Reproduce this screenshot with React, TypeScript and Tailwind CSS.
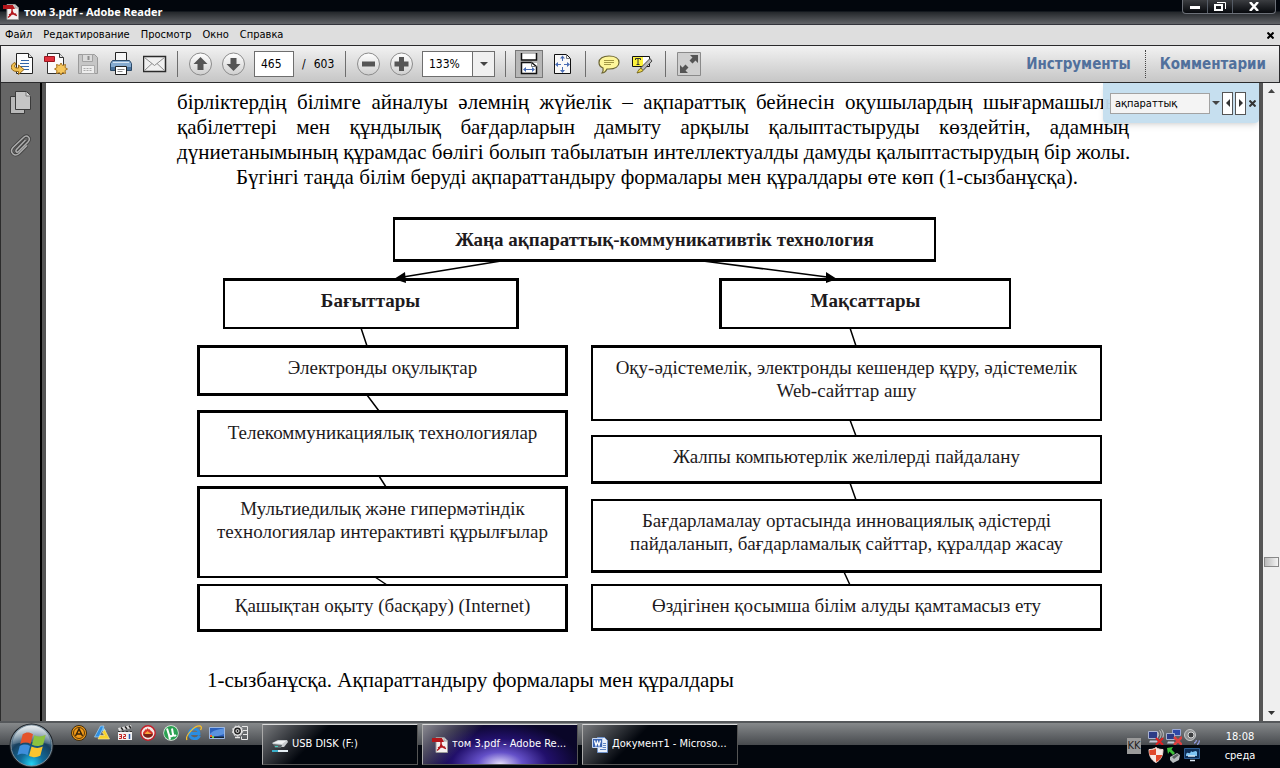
/**
 * PDF reader window
 * Document view with toolbar, find bar and the desktop taskbar below
 */

import React from 'react';

const UI_FONT = "font-['DejaVu_Sans_Condensed','DejaVu_Sans',sans-serif]";

interface DiagramNode {
  text: string;
  box: string;
}

const nodes: DiagramNode[] = [
  {
    text: 'Жаңа ақпараттық-коммуникативтік технология',
    box: 'left-[196px] top-0 w-[543px] h-[45px] border-y-[3px] border-x-2 pt-2 font-bold',
  },
  {
    text: 'Бағыттары',
    box: 'left-[26px] top-[61px] w-[296px] h-[51px] border-t-[3px] border-r-[3px] border-b-2 border-l-2 pt-2 font-bold',
  },
  {
    text: 'Мақсаттары',
    box: 'left-[522px] top-[61px] w-[292px] h-[51px] border-t-[3px] border-l-[3px] border-b-2 border-r-2 pt-2 font-bold',
  },
  { text: 'Электронды оқулықтар', box: 'left-0 top-[128px] w-[371px] h-[51px] border-[3px] pt-2' },
  {
    text: 'Телекоммуникациялық технологиялар',
    box: 'left-0 top-[193px] w-[371px] h-[67px] border-[3px] border-b-2 pt-2',
  },
  {
    text: 'Мультиедилық және гипермәтіндік\nтехнологиялар интерактивті құрылғылар',
    box: 'left-0 top-[269px] w-[371px] h-[92px] border-[3px] border-b-2 pt-2',
  },
  {
    text: 'Қашықтан оқыту (басқару) (Internet)',
    box: 'left-0 top-[367px] w-[371px] h-[48px] border-[3px] border-t-2 pt-2',
  },
  {
    text: 'Оқу-әдістемелік, электронды кешендер құру, әдістемелік\nWeb-сайттар ашу',
    box: 'left-[394px] top-[128px] w-[511px] h-[76px] border-2 border-t-[3px] pt-2',
  },
  {
    text: 'Жалпы компьютерлік желілерді пайдалану',
    box: 'left-[394px] top-[218px] w-[511px] h-[49px] border-2 border-b-[3px] pt-2',
  },
  {
    text: 'Бағдарламалау ортасында инновациялық әдістерді\nпайдаланып, бағдарламалық сайттар, құралдар жасау',
    box: 'left-[394px] top-[282px] w-[511px] h-[74px] border-2 border-b-[3px] pt-2',
  },
  {
    text: 'Өздігінен қосымша білім алуды қамтамасыз ету',
    box: 'left-[394px] top-[367px] w-[511px] h-[47px] border-2 border-b-[3px] pt-2',
  },
];

/* ---------- Icons ---------- */

const PdfIcon: React.FC = () => (
  <svg className="size-4 shrink-0" viewBox="0 0 16 16">
    <path d="M4 .5h8l3.500 3.500v11.500H4z" fill="#f4f0f0" stroke="#9b9b9b" />
    <path d="M12 .5v3.500h3.500" fill="#d8d8d8" stroke="#9b9b9b" />
    <path d="M0 1h10l2 4H0z" fill="#b3161b" />
    <path d="M9 5c.5 3-1 6.500-4 8.500M9 7c1 3 2.500 4 5 4.500M6 11c2-1 4.500-1.500 7-.8" fill="none" stroke="#b3161b" strokeWidth="1.500" />
  </svg>
);

const ExportIcon: React.FC = () => (
  <svg className="size-6" viewBox="0 0 24 24">
    <path d="M5.500 1.500h12l4 4v16h-16z" fill="#fdfdfd" stroke="#222" />
    <path d="M17.500 1.500v4h4" fill="#ddd" stroke="#222" />
    <path d="M10 8.500h8M9 11.500h9M9 14.500h9M12 17.500h6" stroke="#3465a8" />
    <path d="M4 10.500C-1 12-1.500 19.500 6 19.500h1.500v3l5.500-5-5.500-4.500v3H6c-2.500 0-3.500-2-1-4z" fill="#f2c14e" stroke="#94671a" />
  </svg>
);

const CreatePdfIcon: React.FC = () => (
  <svg className="size-6" viewBox="0 0 24 24">
    <path d="M3.500 1.500h12l4 4v16h-16z" fill="#fbfbfb" stroke="#333" />
    <path d="M15.500 1.500v4h4" fill="#ddd" stroke="#333" />
    <path d="M.5 4.500h10v5H.5z" fill="#e0303c" stroke="#9d1620" />
    <path d="M17 11l1.500 2.500 3-1-.5 3 2.500 1.500-2.500 1.500.5 3-3-1L17 23l-1.500-2.500-3 1 .5-3-2.500-1.500 2.500-1.500-.5-3 3 1z" fill="#f5c65b" stroke="#a87420" />
  </svg>
);

const SaveIcon: React.FC = () => (
  <svg className="size-6" viewBox="0 0 24 24">
    <path d="M1.500 2.500h16l3 3v16h-19z" fill="#c6c6c6" stroke="#9a9a9a" />
    <path d="M5.500 2.500h10v7h-10z" fill="#dcdcdc" stroke="#a2a2a2" />
    <path d="M11.500 4v4" stroke="#8f8f8f" strokeWidth="2" />
    <path d="M4.500 13.500h13v8h-13z" fill="#ededed" stroke="#aaa" />
    <path d="M6.500 16.500h9M6.500 18.500h9" stroke="#aaa" strokeDasharray="2 1" />
  </svg>
);

const PrintIcon: React.FC = () => (
  <svg className="size-6" viewBox="0 0 24 24">
    <path d="M5.500.5h11v9h-11z" fill="#f5f5f5" stroke="#222" />
    <path d="M2.500 8.500h17l2 3v7h-21v-7z" fill="#86abd0" stroke="#2c4a69" />
    <path d="M1 15h20v3H1z" fill="#49719a" />
    <path d="M3 10.500h16" stroke="#d5e4f2" />
    <path d="M5.500 14.500h11v8h-11z" fill="#fff" stroke="#222" />
    <path d="M7.500 17.500h7M7.500 19.500h5" stroke="#888" />
  </svg>
);

const MailIcon: React.FC = () => (
  <svg className="size-6" viewBox="0 0 24 24">
    <path d="M.5 4.500h22v15H.5z" fill="#f1f1f1" stroke="#2b2b2b" strokeWidth="1.500" />
    <path d="M1.500 5.500l10 8 10-8M1.500 18.500l7.500-7M21.500 18.500l-7.500-7" fill="none" stroke="#8c8c8c" />
  </svg>
);

const RoundIcon: React.FC<{ path: string }> = ({ path }) => (
  <svg className="size-6" viewBox="0 0 24 24">
    <defs>
      <linearGradient id="round" x1="0" y1="0" x2="0" y2="1">
        <stop offset="0" stopColor="#fff" />
        <stop offset="1" stopColor="#cfcfcf" />
      </linearGradient>
    </defs>
    <circle cx="11.500" cy="12" r="11" fill="url(#round)" stroke="#8b8b8b" />
    <path d={path} fill="#555" />
  </svg>
);

const ScrollPagesIcon: React.FC = () => (
  <svg className="size-[26px]" viewBox="0 0 26 26">
    <path d="M6 3h15v6H6zM6 12h15v11H6z" fill="#fff" />
    <path d="M5.500 2v7h15V2M5.500 22.500v-11h10l5 4v7z" fill="none" stroke="#111" strokeWidth="1.500" />
    <path d="M15.500 11.500v4h5" fill="none" stroke="#777" />
    <path d="M8 18.500h10" stroke="#4a6db5" />
    <path d="M10 16v5l-3-2.500zM16 16v5l3-2.500z" fill="#4a6db5" />
  </svg>
);

const FitPageIcon: React.FC = () => (
  <svg className="size-6" viewBox="0 0 24 24">
    <path d="M3.500 2.500h12l4 4v15h-16z" fill="#f8f8f8" stroke="#111" />
    <path d="M15.500 2.500v4h4" fill="none" stroke="#777" />
    <path d="M11.500 5v4M11.500 15v4M6 12.500h4M13 12.500h4" stroke="#4a6db5" />
    <path d="M9 6.500l2.500-3 2.500 3zM9 18l2.500 3 2.500-3zM7 10l-3 2.500 3 2.500zM16 10l3 2.500-3 2.500z" fill="#4a6db5" />
  </svg>
);

const CommentIcon: React.FC = () => (
  <svg className="size-6" viewBox="0 0 24 24">
    <path d="M12 4c6 0 10 2.500 10 6.500S18 17 12 17c-1 0-1.500 0-2 0-1 2-3 4-5 4 1-1.500 1.500-3 1-5-2.500-1-4-3-4-5.500C2 6.500 6 4 12 4z" fill="#fdf59a" stroke="#6b6431" strokeWidth="1.200" />
    <path d="M7 8.500h10M7 10.500h10M7 12.500h7" stroke="#a39845" />
  </svg>
);

const HighlightIcon: React.FC = () => (
  <svg className="size-6" viewBox="0 0 24 24">
    <path d="M2.500 4.500h17v10h-17z" fill="#fff" stroke="#111" />
    <path d="M3 5h10v9H3z" fill="#fdf33d" />
    <path d="M5.500 8V6.500h5V8M8 6.500v6M6.500 12.500h3" fill="none" stroke="#333" />
    <path d="M20 6.500l2 2.500-9 9.500-4 1 2-4z" fill="#b9b9b9" stroke="#444" />
    <path d="M11 16l2 2.500c-1 1.500-3 1.500-6 2.500 1-2 2-4 4-5z" fill="#f0d94c" stroke="#77691c" />
  </svg>
);

const ExpandIcon: React.FC = () => (
  <svg className="size-6" viewBox="0 0 24 24">
    <path d="M.5.5h23v23H.5z" fill="#cfcfcf" stroke="#8a8a8a" />
    <path d="M13 3h8v8l-2.500-2.500-3 3-3-3 3-3zM3 13l2.500 2.500 3-3 3 3-3 3L11 21H3z" fill="#555" />
  </svg>
);

const PagesIcon: React.FC = () => (
  <svg className="size-6" viewBox="0 0 24 24">
    <path d="M1.500 5.500h14v17h-14z" fill="#b9b9b9" stroke="#3b3b3b" />
    <path d="M6.500.5h11l4 4v14h-15z" fill="#c5c5c5" stroke="#3b3b3b" />
    <path d="M17 1v4h4.500" fill="#ddd" stroke="#777" />
  </svg>
);

const ClipIcon: React.FC = () => (
  <svg className="size-6" viewBox="0 0 24 24">
    <path d="M16.500 7l-9 9.500c-1.500 2 .5 3.500 2 2L19 9c3.500-4-1-8-4.500-4.500L4 14.500c-4 4.500 1.500 10 6 6l8-8" fill="none" stroke="#414141" strokeWidth="3.200" />
    <path d="M16.500 7l-9 9.500c-1.500 2 .5 3.500 2 2L19 9c3.500-4-1-8-4.500-4.500L4 14.500c-4 4.500 1.500 10 6 6l8-8" fill="none" stroke="#adadad" strokeWidth="1.500" />
  </svg>
);

const DiskIcon: React.FC = () => (
  <svg className="size-4 shrink-0" viewBox="0 0 16 16">
    <path d="M0 6l6-3h9l1 2-4 5H4z" fill="#c9cdd0" />
    <path d="M1 6l5-2h8l-4 3z" fill="#f1f3f4" />
    <path d="M1 7l9 1-1 3H3z" fill="#5b6468" />
    <path d="M3 9h3v1H3z" fill="#41d0c0" />
    <path d="M0 13h16v2H0z" fill="#e5eef4" />
    <path d="M0 13h6v2H0z" fill="#3bb0cb" />
  </svg>
);

const WordIcon: React.FC = () => (
  <svg className="size-4 shrink-0" viewBox="0 0 16 16">
    <path d="M5.500.5h7l3 3v12h-10z" fill="#e9f0fb" stroke="#6e92cc" />
    <path d="M8 10.500h6M8 12.500h6M11 6.500h3M11 8.500h3" stroke="#5c84c6" />
    <path d="M.5 1.500h10v9H.5z" fill="#3c66b4" stroke="#c8d8f2" />
    <path d="M2.500 3.500l1.500 5 1.500-4 1.500 4 1.500-5" fill="none" stroke="#fff" strokeWidth="1.300" />
  </svg>
);

const StartOrb: React.FC = () => (
  <svg className="size-[45px]" viewBox="0 0 46 46">
    <defs>
      <radialGradient id="orb" cx=".5" cy=".95" r=".95">
        <stop offset="0" stopColor="#22d3f5" />
        <stop offset=".3" stopColor="#126b9a" />
        <stop offset=".62" stopColor="#17405f" />
        <stop offset="1" stopColor="#a8bac6" />
      </radialGradient>
      <linearGradient id="shine" x1="0" y1="0" x2="0" y2="1">
        <stop offset="0" stopColor="#fff" stopOpacity=".75" />
        <stop offset="1" stopColor="#fff" stopOpacity=".12" />
      </linearGradient>
    </defs>
    <circle cx="23" cy="23" r="22.500" fill="#1c2127" />
    <circle cx="23" cy="23" r="21" fill="url(#orb)" stroke="#8296a3" />
    <path d="M3.500 22a19.500 19.500 0 0 1 39 0c-12-3-27-3-39 0z" fill="url(#shine)" />
    <path d="M14 11.500c4-2.500 7-2 10.500 0L22 21.500c-3-2-6.500-2-10.500 0z" fill="#e4532b" />
    <path d="M26 12.500c4 1.800 7 1.500 11.500-.5L35 22c-4 2-7.500 2-11.500.2z" fill="#8cc23f" />
    <path d="M11 23.500c4-2 7-2 10.500 0L19 33c-3.500-2-6.500-2-10.500 0z" fill="#3f8fdc" />
    <path d="M23 24c4 2 7.500 2 11.500 0L32 33.500c-4 2-7.500 2-11.500 0z" fill="#fbc42e" />
  </svg>
);

const quickLaunch: { name: string; icon: React.ReactNode }[] = [
  {
    name: 'AIMP',
    icon: (
      <>
        <circle cx="8" cy="8" r="7.500" fill="#f29a18" stroke="#3a2a10" />
        <circle cx="8" cy="8" r="5.500" fill="none" stroke="#5b3a0b" />
        <path d="M4.500 11L8 4l3.500 7M6 9h4" fill="none" stroke="#3a2508" strokeWidth="1.500" />
      </>
    ),
  },
  {
    name: 'Alcohol',
    icon: (
      <>
        <path d="M6.500 1H10L5 12H.500z" fill="#2f8fe0" stroke="#bfe0fb" strokeWidth=".6" />
        <path d="M9 1l3 5H8z" fill="#79c0f2" />
        <path d="M10.500 4.500L15.500 14H4l2-3.500h4.500l-2-3z" fill="#f8d22b" stroke="#fff2a8" strokeWidth=".6" />
      </>
    ),
  },
  {
    name: 'Media Player Classic',
    icon: (
      <>
        <path d="M1 7h14v8H1z" fill="#f1f1f1" />
        <path d="M1 3l13-3 .8 3L2 6z" fill="#ddd" />
        <path d="M4 2.500l2 2.500M8 1.500l2 2.500M12 .8l2 2.500" stroke="#222" strokeWidth="1.500" />
        <path d="M1 6.500h14" stroke="#333" strokeDasharray="2 2" />
        <path d="M2 9.500h2.500v4H2M2.500 11.500h2M6.500 9.500h2v2h-2v2h2.500" fill="none" stroke="#c3211f" />
        <path d="M12.500 9v5" stroke="#2b59b0" strokeWidth="1.500" />
      </>
    ),
  },
  {
    name: 'Nero',
    icon: (
      <>
        <circle cx="8" cy="8" r="7.200" fill="#f4e7e3" stroke="#c61d27" strokeWidth="1.400" />
        <path d="M3 9c0-3 2-3 2.500-5 1 1 1.500.5 2-1 1 1 1 2 2 1 .5 2 3.500 2 3.500 5z" fill="#d5322a" />
        <path d="M3 9h10c-.5 5-9.500 5-10 0z" fill="#7a2016" />
        <path d="M5 9c0-2 2-2 3-3 0 2 3 1 3 3z" fill="#f9a63a" />
      </>
    ),
  },
  {
    name: 'uTorrent',
    icon: (
      <>
        <circle cx="8" cy="8" r="7.700" fill="#e7f6e9" />
        <circle cx="8" cy="8" r="7" fill="#2ba052" />
        <path d="M4 3.500l2 6.500c1 2 4 1.500 4-.5L9 3.500M10 9c.5 2 2 2 3 1M6 10l1 4.500" fill="none" stroke="#fff" strokeWidth="2" />
      </>
    ),
  },
  {
    name: 'Internet Explorer',
    icon: (
      <>
        <path d="M13.500 10.500C12 15 3.500 15 3.500 8.500S13 2.500 13 8.500H5" fill="none" stroke="#2a8de2" strokeWidth="2.800" />
        <path d="M1 15C-1.500 11 9 0 14 1c2 .5 1.500 2.500.5 4" fill="none" stroke="#f4bd2f" strokeWidth="1.300" />
      </>
    ),
  },
  {
    name: 'Свернуть все окна',
    icon: (
      <>
        <path d="M.5 2.500h15v11H.5z" fill="#2d62bd" stroke="#9cb8e2" />
        <path d="M1 9c4-5 9-4 14-6v6c-5 2-9 3-14 3z" fill="#5a92de" />
        <path d="M1 11.500h14v1.500H1z" fill="#123" />
        <path d="M1 10h2v2H1z" fill="#f05a28" />
        <path d="M3 11h2v2H3z" fill="#7bd043" />
      </>
    ),
  },
  {
    name: 'Кодеки',
    icon: (
      <>
        <circle cx="5.500" cy="6" r="4.200" fill="#222" stroke="#e6e6e6" strokeWidth="1.600" />
        <circle cx="5.500" cy="6" r="5.200" fill="none" stroke="#e6e6e6" strokeDasharray="1.500 2" />
        <circle cx="5.500" cy="6" r="1.500" fill="none" stroke="#e6e6e6" />
        <path d="M10 1.500h5.500v13H9.500v-3M11 5.500h4M11 9.500h4" fill="none" stroke="#e6e6e6" />
        <path d="M3 12.500h5" stroke="#e6e6e6" strokeWidth="1.500" />
      </>
    ),
  },
];

const trayIcons: { name: string; icon: React.ReactNode }[] = [
  {
    name: 'Беспроводная сеть',
    icon: (
      <>
        <path d="M.5 2.500h9v7h-9z" fill="#2c3c86" stroke="#a9b2cf" />
        <path d="M2 11.500h7l1 2H1z" fill="#c3c8d6" />
        <path d="M9.500 3c1.500 1.500 1.500 3.500 0 5M11.500 1.500c2 2 2 5.500 0 8M13.500.5c2.500 3 2.500 7 0 10" fill="none" stroke="#ccc" />
        <path d="M8 9l7 7M15 9l-7 7" stroke="#e02020" strokeWidth="2" />
      </>
    ),
  },
  {
    name: 'Подключение по локальной сети',
    icon: (
      <>
        <path d="M6.500.5h8v6h-8z" fill="#2f49a8" stroke="#9aa7d4" />
        <path d="M.5 4.500h8v6h-8z" fill="#2c3c86" stroke="#a9b2cf" />
        <path d="M2 12.500h6l1 2H1z" fill="#c3c8d6" />
        <path d="M8 8l8 8M16 8l-8 8" stroke="#e04040" strokeWidth="2.500" />
      </>
    ),
  },
  {
    name: 'Громкость',
    icon: (
      <>
        <circle cx="6" cy="6" r="5.500" fill="#8d8f90" stroke="#c9cbcc" />
        <circle cx="7" cy="6" r="3" fill="#3c3e40" stroke="#d9d9d9" />
        <path d="M10 14c1.500 0 2-1 2.500-3M13 15.500c1.500 0 2-1.500 2.500-4" fill="none" stroke="#8d97d8" strokeWidth="1.300" />
      </>
    ),
  },
  {
    name: 'Центр обеспечения безопасности',
    icon: (
      <>
        <path d="M8 .5c2 1.500 4 2 7 2 0 6-2 10.500-7 13-5-2.500-7-7-7-13 3 0 5-.5 7-2z" fill="#f7e9e4" stroke="#f3d9d2" />
        <path d="M8 1.500V8H1.700C1.200 6 1.200 4.500 1.500 3 4 3 6 2.500 8 1.500zM8 8h6.300c-1 3.500-3 5.500-6.300 7z" fill="#e0472a" />
      </>
    ),
  },
  {
    name: 'Безопасное извлечение устройства',
    icon: (
      <>
        <path d="M4 10l7-4 3 2-1 5-6 3-3-3z" fill="#b8bdbf" />
        <path d="M6 10l5-3 2 1-5 4z" fill="#595f61" />
        <path d="M1 1l6-1-1.500 2.500L9 6 7 8 3.500 4.500 2 7z" fill="#3fc13a" />
      </>
    ),
  },
  {
    name: 'Графика',
    icon: (
      <>
        <path d="M.5 1.500h15v10H.5z" fill="#0d2c55" stroke="#2d5c92" />
        <path d="M2 8c1-5 4 1 5-4 2 3 4-2 6 1v4H2z" fill="#7fc4f3" />
        <path d="M4 9h7M6 13.500h5" stroke="#d9e6f1" strokeWidth="1.500" />
      </>
    ),
  },
];

/* ---------- Window parts ---------- */

const TitleBar: React.FC = () => (
  <header className="flex h-6 items-start justify-between bg-linear-to-b from-[#02060d] from-45% via-[#24272b] via-50% to-[#626468] pl-[3px] pr-1">
    <div className="flex h-6 items-center gap-[5px]">
      <PdfIcon />
      <h1 className="font-['Open_Sans',sans-serif] text-[11px] font-bold text-white">том 3.pdf - Adobe Reader</h1>
    </div>
    <div className="flex h-[14px] divide-x divide-[#555c66] rounded-b-sm border border-t-0 border-[#6c7078] bg-linear-to-b from-[#3b3d41] to-[#080a0e] text-white">
      <button aria-label="Свернуть" className="flex w-[25px] items-end justify-center pb-1">
        <span className="h-[3px] w-[10px] bg-white" />
      </button>
      <button aria-label="Восстановить" className="flex w-[25px] items-center justify-center">
        <svg className="h-[11px] w-3" viewBox="0 0 12 11">
          <path d="M3 1.500h8.500V8" fill="none" stroke="#fff" />
          <path d="M1 4h7v5H1z" fill="none" stroke="#fff" strokeWidth="2" />
        </svg>
      </button>
      <button aria-label="Закрыть" className="flex w-[42px] items-center justify-center">
        <svg className="h-[9px] w-[10px]" viewBox="0 0 10 9">
          <path d="M1 0l8 9M9 0L1 9" stroke="#fff" strokeWidth="2.500" />
        </svg>
      </button>
    </div>
  </header>
);

const MenuBar: React.FC = () => (
  <nav className="flex h-[21px] items-center justify-between border-t border-[#33343c] bg-[#dedede] pl-[5px] pr-[6px]">
    <div className="flex gap-[11px] text-[11px] text-black">
      {['Файл', 'Редактирование', 'Просмотр', 'Окно', 'Справка'].map((item) => (
        <button key={item}>{item}</button>
      ))}
    </div>
    <button aria-label="Закрыть документ">
      <svg className="size-[7px]" viewBox="0 0 7 7">
        <path d="M.5.5l6 6M6.500.5l-6 6" stroke="#000" strokeWidth="2" />
      </svg>
    </button>
  </nav>
);

const Separator: React.FC = () => <div className="h-[26px] w-px bg-[#6d6d6d]" />;

const Toolbar: React.FC = () => (
  <div className="flex h-[38px] items-center border border-[#2a2a2c] bg-linear-to-b from-[#f2f2f2] to-[#c6c6c6] pl-[10px] pr-[13px] text-[12px] text-black">
    <div className="flex gap-[9px] pr-[10px]">
      <button aria-label="Открыть"><ExportIcon /></button>
      <button aria-label="Создать PDF"><CreatePdfIcon /></button>
      <button aria-label="Сохранить"><SaveIcon /></button>
      <button aria-label="Печать"><PrintIcon /></button>
      <button aria-label="Отправить"><MailIcon /></button>
    </div>
    <Separator />
    <div className="flex gap-[9px] pl-[11px] pr-2">
      <button aria-label="Предыдущая страница">
        <RoundIcon path="M11.500 5l7 7h-4v6h-6v-6h-4z" />
      </button>
      <button aria-label="Следующая страница">
        <RoundIcon path="M11.500 19l7-7h-4V6h-6v6h-4z" />
      </button>
    </div>
    <input
      aria-label="Номер страницы"
      defaultValue="465"
      className="h-[26px] w-10 border border-[#6e6e6e] bg-white pl-[6px]"
    />
    <div className="flex w-[51px] gap-2 pl-2">
      <span>/</span>
      <span>603</span>
    </div>
    <Separator />
    <div className="flex gap-[9px] pl-[11px] pr-2">
      <button aria-label="Уменьшить">
        <RoundIcon path="M5 9.500h13v5H5z" />
      </button>
      <button aria-label="Увеличить">
        <RoundIcon path="M9 5h5v4.500h4.500v5H14V19H9v-4.500H4.500v-5H9z" />
      </button>
    </div>
    <div className="relative mr-[10px] h-[26px] w-[73px]">
      <select
        aria-label="Масштаб"
        defaultValue="133%"
        className="size-full appearance-none border border-[#6e6e6e] bg-white pl-[6px]"
      >
        <option>133%</option>
      </select>
      <div className="pointer-events-none absolute inset-y-px right-px flex w-[22px] items-center justify-center border-l border-[#6e6e6e] bg-[#f0f0f0]">
        <svg className="h-1 w-2" viewBox="0 0 8 4">
          <path d="M0 0h8L4 4z" fill="#444" />
        </svg>
      </div>
    </div>
    <Separator />
    <div className="flex items-center gap-[9px] px-[10px]">
      <button aria-label="Прокрутка страниц" className="bg-[#b7b7b7] outline outline-[#777]">
        <ScrollPagesIcon />
      </button>
      <button aria-label="Страница целиком"><FitPageIcon /></button>
    </div>
    <Separator />
    <div className="flex gap-[9px] px-[11px]">
      <button aria-label="Заметка"><CommentIcon /></button>
      <button aria-label="Выделить текст"><HighlightIcon /></button>
    </div>
    <Separator />
    <button aria-label="Полный экран" className="ml-[11px]"><ExpandIcon /></button>
    <div className="ml-auto flex items-center text-[15px] font-bold text-[#51709c]">
      <button className="pr-[14px]">Инструменты</button>
      <div className="h-7 border-l border-dotted border-[#444]" />
      <button className="pl-[14px]">Комментарии</button>
    </div>
  </div>
);

const FindBar: React.FC = () => (
  <div className="absolute right-0 top-0 flex h-10 w-[156px] items-center rounded-b bg-[#c3ddee]/95 pl-[7px] shadow-md">
    <input
      aria-label="Найти"
      defaultValue="ақпараттық"
      className="h-[21px] w-[100px] border border-[#a2a2a2] bg-[#f4f4f4] pl-1 text-[11px] text-black"
    />
    <button aria-label="Параметры поиска" className="px-[2px]">
      <svg className="h-1 w-2" viewBox="0 0 8 4">
        <path d="M0 0h8L4 4z" fill="#444" />
      </svg>
    </button>
    <div className="flex gap-[2px]">
      <button aria-label="Назад" className="flex h-[23px] w-[11px] items-center justify-center border border-[#555] bg-white">
        <svg className="h-2 w-1" viewBox="0 0 4 8">
          <path d="M4 0v8L0 4z" fill="#333" />
        </svg>
      </button>
      <button aria-label="Вперед" className="flex h-[23px] w-[11px] items-center justify-center border border-[#555] bg-white">
        <svg className="h-2 w-1" viewBox="0 0 4 8">
          <path d="M0 0v8l4-4z" fill="#333" />
        </svg>
      </button>
    </div>
    <button aria-label="Закрыть поиск" className="ml-[3px]">
      <svg className="size-[7px]" viewBox="0 0 7 7">
        <path d="M.5.5l6 6M6.500.5l-6 6" stroke="#333" strokeWidth="2" />
      </svg>
    </button>
  </div>
);

const Diagram: React.FC = () => (
  <div className="relative ml-5 h-[415px] w-[906px] text-[19px] leading-[23px] text-[#1d1a1c]">
    <svg className="absolute inset-0 size-full" viewBox="0 0 906 415">
      <g stroke="#000" strokeWidth="1.500">
        <path d="M304 44L206 60M506 44l124 16" />
        <path d="M164 111l6 18M170 178l12 16M182 259l7 11M178 360l12 8" />
        <path d="M653 111l6 18M653 203l6 16M653 266l6 17M647 355l6 13" />
      </g>
    </svg>
    {nodes.map((node) => (
      <div key={node.text} className={`absolute whitespace-pre-line border-black bg-white text-center ${node.box}`}>
        {node.text}
      </div>
    ))}
    {/* Arrow heads lie over the box borders */}
    <svg className="absolute inset-0 size-full" viewBox="0 0 906 415">
      <path d="M197 62l11-7 1 11zM640 62l-11-7v11z" fill="#000" />
    </svg>
  </div>
);

const DocumentPage: React.FC = () => (
  <article className="min-w-0 flex-1 bg-white pb-7 pl-[131px] pr-[130px] pt-[7px] font-['Liberation_Serif',serif] text-[21px] leading-[25px] text-black">
    {/* Lines keep the breaks of the printed page */}
    <p className="text-justify whitespace-nowrap [text-align-last:justify]">
      бірліктердің білімге айналуы әлемнің жүйелік – ақпараттық бейнесін оқушылардың шығармашылық
      <br />
      қабілеттері мен құндылық бағдарларын дамыту арқылы қалыптастыруды көздейтін, адамның
      <br />
      дүниетанымының құрамдас бөлігі болып табылатын интеллектуалды дамуды қалыптастырудың бір жолы.
    </p>
    <p className="mb-[27px] indent-[59px]">
      Бүгінгі таңда білім беруді ақпараттандыру формалары мен құралдары өте көп (1-сызбанұсқа).
    </p>
    <Diagram />
    <p className="mt-9 pl-[30px]">1-сызбанұсқа. Ақпараттандыру формалары мен құралдары</p>
  </article>
);

const Sidebar: React.FC = () => (
  <aside className="flex w-[42px] shrink-0 flex-col items-center gap-[18px] border-l border-r-2 border-l-[#2c2c2c] border-r-black bg-[#666] pt-2">
    <button aria-label="Миниатюры страниц"><PagesIcon /></button>
    <button aria-label="Вложения"><ClipIcon /></button>
  </aside>
);

const ScrollBar: React.FC = () => (
  <div className="flex w-[17px] shrink-0 flex-col items-center bg-[#efefef] py-[6px]">
    <svg className="h-1 w-[7px]" viewBox="0 0 7 4">
      <path d="M0 4h7L3.500 0z" fill="#444" />
    </svg>
    <div className="grow-[466]" />
    <div className="h-[10px] w-[15px] border border-[#888] bg-linear-to-r from-[#bbb] to-[#f4f4f4]" />
    <div className="grow-[144]" />
    <svg className="h-1 w-[7px]" viewBox="0 0 7 4">
      <path d="M0 0h7L3.500 4z" fill="#333" />
    </svg>
  </div>
);

const TaskButton: React.FC<{ label: string; icon: React.ReactNode; active?: boolean }> = ({ label, icon, active }) => (
  <button
    className={`flex h-[41px] w-[156px] items-center gap-1 border border-l-[#aaa] border-t-[#ddd] border-r-[#555] border-b-[#555] px-[9px] text-[11px] text-white ${
      active
        ? 'bg-[linear-gradient(135deg,#8a8a90_0%,#8a8a9000_32%),radial-gradient(ellipse_80px_42px_at_50%_100%,#e4defc_0%,#6450c8_28%,#22106c_60%,#0a0628_100%)]'
        : 'bg-[linear-gradient(135deg,#77797c_0%,#02060d_35%)]'
    }`}
  >
    {icon}
    <span className="truncate">{label}</span>
  </button>
);

const Taskbar: React.FC = () => (
  <footer className="flex h-[47px] items-start border-t-2 border-[#55585b] bg-linear-to-b from-[#86898b] via-[#46494d] via-50% to-[#02060d] to-50% pl-[9px] pr-[22px]">
    <button aria-label="Пуск"><StartOrb /></button>
    <div className="flex gap-[7px] pl-[17px] pt-[2px]">
      {quickLaunch.map((item) => (
        <button key={item.name} aria-label={item.name}>
          <svg className="size-4" viewBox="0 0 16 16">{item.icon}</svg>
        </button>
      ))}
    </div>
    <div className="flex gap-1 pl-[14px] pt-px">
      <TaskButton label="USB DISK (F:)" icon={<DiskIcon />} />
      <TaskButton label="том 3.pdf - Adobe Re..." icon={<PdfIcon />} active />
      <TaskButton label="Документ1 - Microso..." icon={<WordIcon />} />
    </div>
    <div className="ml-auto flex h-full items-center text-[11px] text-white">
      <span className="w-[14px] bg-[#9a9a9a] text-center leading-4 text-[#222]">KK</span>
      <div className="grid grid-cols-3 gap-[2px] pl-[7px]">
        {trayIcons.map((item) => (
          <button key={item.name} aria-label={item.name}>
            <svg className="size-4" viewBox="0 0 16 16">{item.icon}</svg>
          </button>
        ))}
      </div>
      <div className="ml-[22px] w-9 text-center leading-[19px]">
        <div>18:08</div>
        <div>среда</div>
      </div>
    </div>
  </footer>
);

const App: React.FC = () => {
  return (
    <div className={`flex min-h-screen flex-col bg-[#555] ${UI_FONT}`}>
      <TitleBar />
      <MenuBar />
      <Toolbar />

      {/* Document area */}
      <main className="flex flex-1">
        <Sidebar />
        <div className="relative flex min-w-0 flex-1 border-x-4 border-[#555]">
          <DocumentPage />
          <FindBar />
        </div>
        <ScrollBar />
      </main>

      <Taskbar />
    </div>
  );
};

export default App;
